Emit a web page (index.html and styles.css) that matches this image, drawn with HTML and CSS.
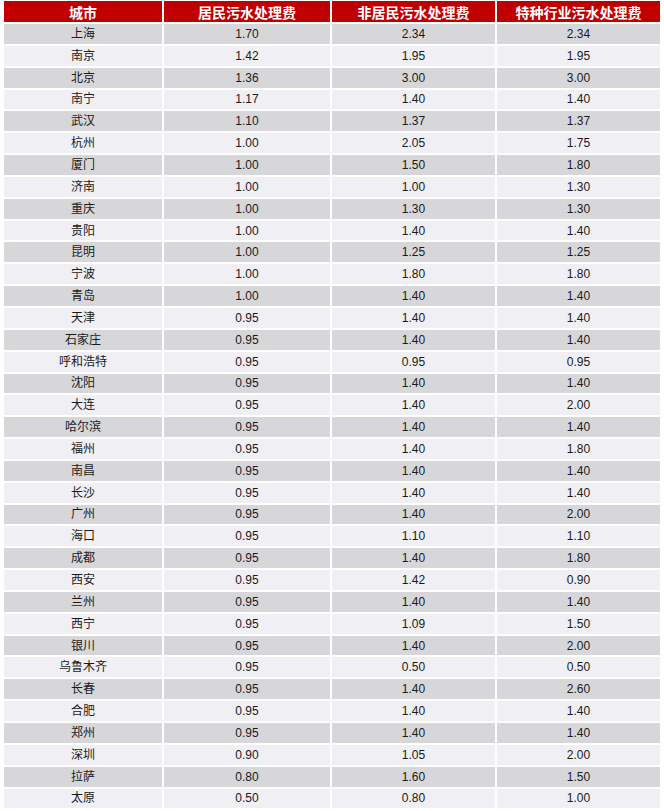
FILE: index.html
```html
<!DOCTYPE html>
<html lang="zh">
<head>
<meta charset="utf-8">
<link rel="stylesheet" href="styles.css">
</head>
<body>
<div class="table">
<div class="row head"><div>城市</div><div>居民污水处理费</div><div>非居民污水处理费</div><div>特种行业污水处理费</div></div>
<div class="row odd"><div>上海</div><div>1.70</div><div>2.34</div><div>2.34</div></div>
<div class="row even"><div>南京</div><div>1.42</div><div>1.95</div><div>1.95</div></div>
<div class="row odd"><div>北京</div><div>1.36</div><div>3.00</div><div>3.00</div></div>
<div class="row even"><div>南宁</div><div>1.17</div><div>1.40</div><div>1.40</div></div>
<div class="row odd"><div>武汉</div><div>1.10</div><div>1.37</div><div>1.37</div></div>
<div class="row even"><div>杭州</div><div>1.00</div><div>2.05</div><div>1.75</div></div>
<div class="row odd"><div>厦门</div><div>1.00</div><div>1.50</div><div>1.80</div></div>
<div class="row even"><div>济南</div><div>1.00</div><div>1.00</div><div>1.30</div></div>
<div class="row odd"><div>重庆</div><div>1.00</div><div>1.30</div><div>1.30</div></div>
<div class="row even"><div>贵阳</div><div>1.00</div><div>1.40</div><div>1.40</div></div>
<div class="row odd"><div>昆明</div><div>1.00</div><div>1.25</div><div>1.25</div></div>
<div class="row even"><div>宁波</div><div>1.00</div><div>1.80</div><div>1.80</div></div>
<div class="row odd"><div>青岛</div><div>1.00</div><div>1.40</div><div>1.40</div></div>
<div class="row even"><div>天津</div><div>0.95</div><div>1.40</div><div>1.40</div></div>
<div class="row odd"><div>石家庄</div><div>0.95</div><div>1.40</div><div>1.40</div></div>
<div class="row even"><div>呼和浩特</div><div>0.95</div><div>0.95</div><div>0.95</div></div>
<div class="row odd"><div>沈阳</div><div>0.95</div><div>1.40</div><div>1.40</div></div>
<div class="row even"><div>大连</div><div>0.95</div><div>1.40</div><div>2.00</div></div>
<div class="row odd"><div>哈尔滨</div><div>0.95</div><div>1.40</div><div>1.40</div></div>
<div class="row even"><div>福州</div><div>0.95</div><div>1.40</div><div>1.80</div></div>
<div class="row odd"><div>南昌</div><div>0.95</div><div>1.40</div><div>1.40</div></div>
<div class="row even"><div>长沙</div><div>0.95</div><div>1.40</div><div>1.40</div></div>
<div class="row odd"><div>广州</div><div>0.95</div><div>1.40</div><div>2.00</div></div>
<div class="row even"><div>海口</div><div>0.95</div><div>1.10</div><div>1.10</div></div>
<div class="row odd"><div>成都</div><div>0.95</div><div>1.40</div><div>1.80</div></div>
<div class="row even"><div>西安</div><div>0.95</div><div>1.42</div><div>0.90</div></div>
<div class="row odd"><div>兰州</div><div>0.95</div><div>1.40</div><div>1.40</div></div>
<div class="row even"><div>西宁</div><div>0.95</div><div>1.09</div><div>1.50</div></div>
<div class="row odd"><div>银川</div><div>0.95</div><div>1.40</div><div>2.00</div></div>
<div class="row even"><div>乌鲁木齐</div><div>0.95</div><div>0.50</div><div>0.50</div></div>
<div class="row odd"><div>长春</div><div>0.95</div><div>1.40</div><div>2.60</div></div>
<div class="row even"><div>合肥</div><div>0.95</div><div>1.40</div><div>1.40</div></div>
<div class="row odd"><div>郑州</div><div>0.95</div><div>1.40</div><div>1.40</div></div>
<div class="row even"><div>深圳</div><div>0.90</div><div>1.05</div><div>2.00</div></div>
<div class="row odd"><div>拉萨</div><div>0.80</div><div>1.60</div><div>1.50</div></div>
<div class="row even"><div>太原</div><div>0.50</div><div>0.80</div><div>1.00</div></div>
</div>
</body>
</html>
```

FILE: styles.css
```css
html, body {
  margin: 0;
  padding: 0;
  background: #ffffff;
}
body {
  font-family: "Liberation Sans", "Noto Sans CJK SC", sans-serif;
  color: #1a1a1a;
}
.table {
  display: flex;
  flex-direction: column;
  gap: 2px;
  padding: 1px 0 0 4px;
}
.row {
  display: grid;
  grid-template-columns: 158px 166px 163px 163px;
  column-gap: 2px;
  height: 19.857px;
}
.row > div {
  display: flex;
  align-items: center;
  justify-content: center;
  font-size: 12px;
  line-height: 1;
}
.head {
  height: 21px;
}
.head > div {
  background: #c00000;
  color: #ffffff;
  font-weight: bold;
  font-size: 14px;
  font-family: "Noto Sans CJK SC", sans-serif;
}
.odd > div {
  background: #d7d7da;
}
.even > div {
  background: #f0eff3;
}
```
